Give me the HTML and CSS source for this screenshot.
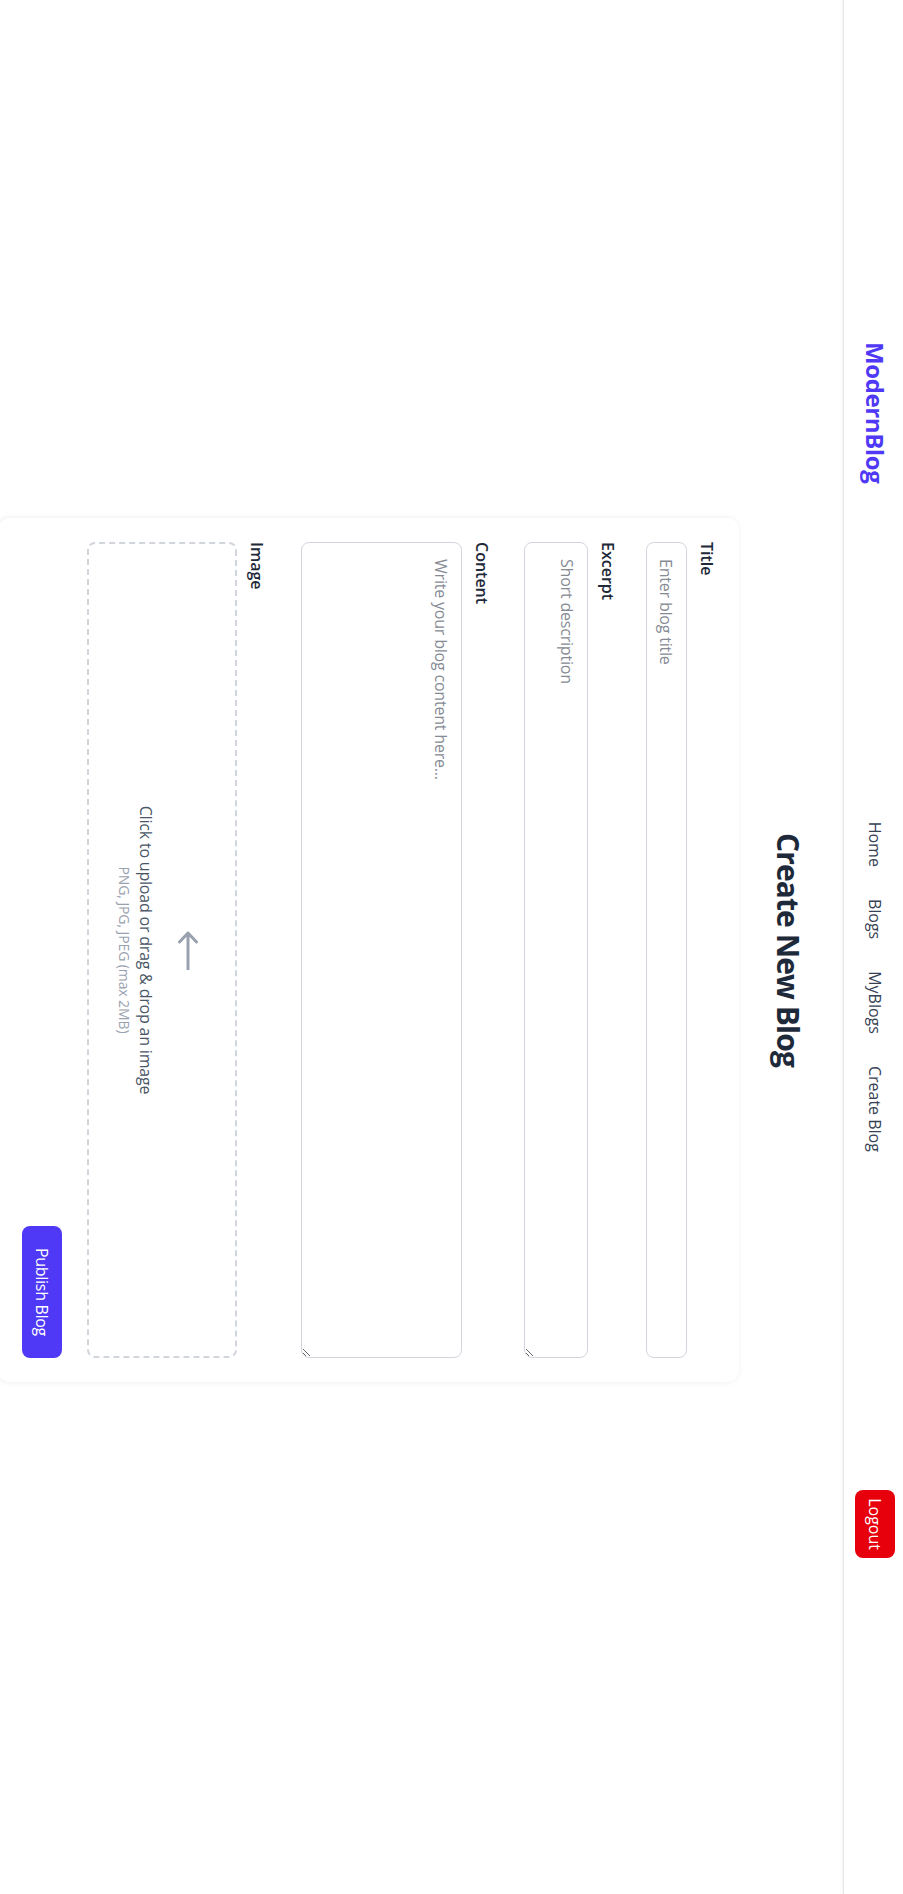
FILE: index.html
```html
<!DOCTYPE html>
<html lang="en">
<head>
<meta charset="utf-8">
<title>Create New Blog - ModernBlog</title>
<link rel="stylesheet" href="styles.css">
</head>
<body>
<div class="frame">
<div class="page">
  <nav class="nav">
    <div class="nav-inner">
      <a class="logo" href="#">ModernBlog</a>
      <ul class="links">
        <li><a href="#">Home</a></li>
        <li><a href="#">Blogs</a></li>
        <li><a href="#">MyBlogs</a></li>
        <li><a href="#">Create Blog</a></li>
      </ul>
      <button class="logout" type="button">Logout</button>
    </div>
  </nav>
  <main class="main">
    <h1 class="title">Create New Blog</h1>
    <form class="card">
      <div class="field f-title">
        <label class="label" for="t">Title</label>
        <input class="input" id="t" type="text" placeholder="Enter blog title">
      </div>
      <div class="field f-excerpt">
        <label class="label" for="e">Excerpt</label>
        <textarea class="input area-excerpt" id="e" placeholder="Short description"></textarea>
      </div>
      <div class="field f-content">
        <label class="label" for="c">Content</label>
        <textarea class="input area-content" id="c" placeholder="Write your blog content here..."></textarea>
      </div>
      <div class="field f-image">
        <label class="label">Image</label>
        <div class="drop">
          <svg class="drop-icon" width="40" height="20" viewBox="0 0 40 20" aria-hidden="true">
            <path d="M3 10 H39 M12 1.5 L3 10 L12 18.5" fill="none" stroke="#99a1af" stroke-width="3" stroke-linecap="round" stroke-linejoin="round"/>
          </svg>
          <p class="drop-main">Click to upload or drag &amp; drop an image</p>
          <p class="drop-sub">PNG, JPG, JPEG (max 2MB)</p>
        </div>
      </div>
      <div class="actions">
        <button class="publish" type="button">Publish Blog</button>
      </div>
    </form>
  </main>
</div>
</div>
</body>
</html>
```
FILE: styles.css
```css
html {
  overflow: hidden;
}

body {
  margin: 0;
  padding: 0;
  background: #ffffff;
}

.frame {
  width: 903px;
  height: 1894px;
  overflow: hidden;
}

.page {
  width: 1894px;
  height: 903px;
  transform-origin: 0 0;
  transform: translateX(903px) rotate(90deg);
  font-family: "Open Sans", "Noto Sans", sans-serif;
  color: #1e2939;
  background: #ffffff;
}

.nav {
  height: 60px;
  box-sizing: border-box;
  padding-left: 6px;
  padding-bottom: 3px;
  border-bottom: 1px solid #e5e7eb;
  box-shadow: 0 1px 3px rgba(0, 0, 0, 0.05);
  background: #ffffff;
}

.nav-inner {
  width: 1216px;
  height: 56px;
  margin: 0 auto;
  display: flex;
  align-items: center;
  justify-content: space-between;
}

.logo {
  font-size: 24px;
  line-height: 32px;
  font-weight: 700;
  letter-spacing: -0.4px;
  color: #4f39f6;
  text-decoration: none;
}

.links {
  list-style: none;
  margin: 0;
  padding: 0;
  display: flex;
  gap: 32px;
}

.links a {
  font-size: 16px;
  line-height: 24px;
  color: #364153;
  text-decoration: none;
}

.logout {
  font-family: inherit;
  font-size: 16px;
  line-height: 24px;
  padding: 8px 8px;
  border: 0;
  border-radius: 8px;
  background: #e7000b;
  color: #ffffff;
}

.main {
  padding-top: 37px;
  padding-left: 6px;
}

.title {
  margin: 0 0 31px;
  font-size: 30px;
  line-height: 36px;
  font-weight: 700;
  letter-spacing: -0.9px;
  text-align: center;
  color: #1e2939;
}

.card {
  width: 864px;
  box-sizing: border-box;
  margin: 0 auto;
  padding: 20px 24px 24px;
  border-radius: 12px;
  background: #ffffff;
  box-shadow: 0 1px 6px rgba(0, 0, 0, 0.08);
}

.label {
  display: block;
  margin-bottom: 8px;
  font-size: 16px;
  line-height: 24px;
  font-weight: 600;
  color: #1e2939;
}

.input {
  display: block;
  width: 100%;
  box-sizing: border-box;
  height: 41px;
  margin: 0;
  padding: 8px 16px;
  border: 1px solid #d1d5dc;
  border-radius: 8px;
  font-family: inherit;
  font-size: 16px;
  line-height: 24px;
  letter-spacing: -0.2px;
  color: #1e2939;
  background: #ffffff;
  outline: none;
}

.input::placeholder {
  color: #858a94;
}

.area-excerpt {
  height: 64px;
}

.area-content {
  height: 161px;
}

.f-excerpt { margin-top: 26px; }
.f-content { margin-top: 30px; }
.f-image { margin-top: 32px; }

.drop {
  height: 150px;
  box-sizing: border-box;
  padding-top: 37px;
  border: 2px dashed #d1d5dc;
  border-radius: 8px;
  display: flex;
  flex-direction: column;
  align-items: center;
}

.drop-icon {
  display: block;
  margin-bottom: 20px;
}

.drop-main {
  margin: 0;
  font-size: 16px;
  line-height: 24px;
  letter-spacing: -0.2px;
  color: #4a5565;
}

.drop-sub {
  margin: 0;
  font-size: 14px;
  line-height: 20px;
  letter-spacing: -0.1px;
  color: #99a1af;
}

.actions {
  margin-top: 25px;
  display: flex;
  justify-content: flex-end;
}

.publish {
  height: 40px;
  padding: 0 22px;
  border: 0;
  border-radius: 8px;
  background: #4f39f6;
  color: #ffffff;
  font-family: inherit;
  font-size: 16px;
  line-height: 24px;
  letter-spacing: -0.3px;
}
```
